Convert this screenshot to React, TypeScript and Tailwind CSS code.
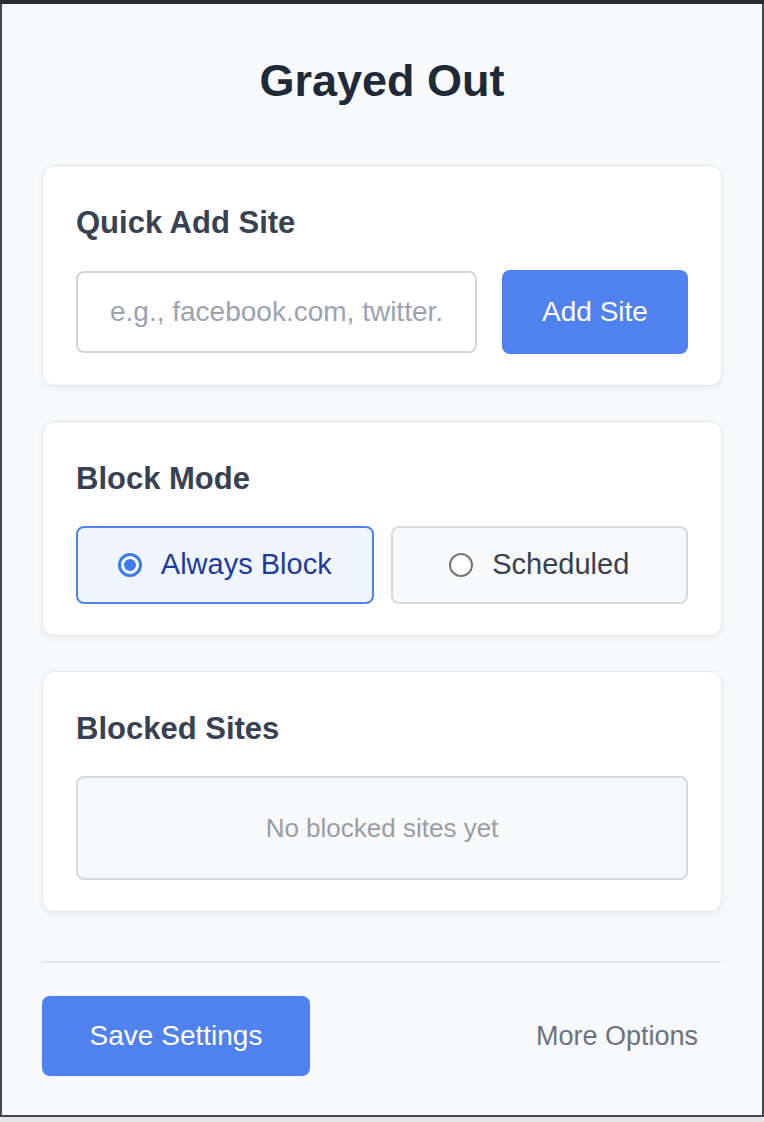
import { useState } from 'react';

const font = { fontFamily: '"Liberation Sans", Arial, Helvetica, sans-serif' };

const Card = ({ title, children }: { title: string; children: React.ReactNode }) => (
  <div className="bg-white border border-[#e5e7eb] rounded-[12px] shadow-[0_2px_6px_rgba(0,0,0,0.06)] pt-[37px] px-[33px] pb-[31px]">
    <h2 className="text-[31px] leading-[40px] font-bold text-[#374151] mb-[27px]">{title}</h2>
    {children}
  </div>
);

const Radio = ({ checked }: { checked: boolean }) =>
  checked ? (
    <span className="w-[24px] h-[24px] rounded-full border-[3px] border-[#3b7cf0] bg-white flex items-center justify-center">
      <span className="w-[12px] h-[12px] rounded-full bg-[#3b7cf0]" />
    </span>
  ) : (
    <span className="w-[24px] h-[24px] rounded-full border-2 border-[#767676] bg-white" />
  );

const App = () => {
  const [mode, setMode] = useState<'always' | 'scheduled'>('always');
  const [site, setSite] = useState('');

  return (
    <div className="w-[764px] h-[1122px] bg-[#e6e6e6] overflow-hidden" style={font}>
      <div className="h-[4px] bg-[#2b2c2f]" />
      <div className="h-[1113px] bg-[#f8f9fb] border-l-2 border-r-2 border-b-2 border-[#47484b] px-[40px] pt-[50px] flex flex-col">
        <h1 className="text-[45px] leading-[54px] font-bold text-[#1f2937] text-center mb-[57px]">Grayed Out</h1>

        <div className="flex flex-col gap-[35px]">
          <Card title="Quick Add Site">
            <div className="flex items-center gap-[25px]">
              <input
                value={site}
                onChange={(e) => setSite(e.target.value)}
                placeholder="e.g., facebook.com, twitter."
                className="flex-1 min-w-0 h-[82px] px-[32px] bg-white border-2 border-[#d1d5db] rounded-[8px] text-[28px] text-[#374151] placeholder:text-[#9ca3af] outline-none"
              />
              <button className="w-[186px] h-[84px] bg-[#4f82ee] text-white text-[28px] rounded-[8px]">Add Site</button>
            </div>
          </Card>

          <Card title="Block Mode">
            <div className="grid grid-cols-2 gap-[17px]">
              <button
                onClick={() => setMode('always')}
                className={
                  mode === 'always'
                    ? 'h-[78px] flex items-center justify-center gap-[19px] rounded-[8px] border-2 border-[#4f82ee] bg-[#eff6ff] text-[#1e3a9e] text-[29px]'
                    : 'h-[78px] flex items-center justify-center gap-[19px] rounded-[8px] border-2 border-[#d7d9dd] bg-[#f8f9fa] text-[#374151] text-[29px]'
                }
              >
                <Radio checked={mode === 'always'} />
                Always Block
              </button>
              <button
                onClick={() => setMode('scheduled')}
                className={
                  mode === 'scheduled'
                    ? 'h-[78px] flex items-center justify-center gap-[19px] rounded-[8px] border-2 border-[#4f82ee] bg-[#eff6ff] text-[#1e3a9e] text-[29px]'
                    : 'h-[78px] flex items-center justify-center gap-[19px] rounded-[8px] border-2 border-[#d7d9dd] bg-[#f8f9fa] text-[#374151] text-[29px]'
                }
              >
                <Radio checked={mode === 'scheduled'} />
                Scheduled
              </button>
            </div>
          </Card>

          <Card title="Blocked Sites">
            <div className="h-[104px] flex items-center justify-center rounded-[8px] border-2 border-[#d7d9dd] bg-[#f8f9fa] text-[26px] text-[#9a9da3]">
              No blocked sites yet
            </div>
          </Card>
        </div>

        <div className="mt-[49px] h-[2px] bg-[#e5e7eb]" />

        <div className="mt-[33px] flex items-center justify-between">
          <button className="w-[268px] h-[80px] bg-[#4f82ee] text-white text-[28px] rounded-[8px]">Save Settings</button>
          <button className="px-[24px] text-[27px] text-[#6b7280]">More Options</button>
        </div>
      </div>
    </div>
  );
};

export default App;
